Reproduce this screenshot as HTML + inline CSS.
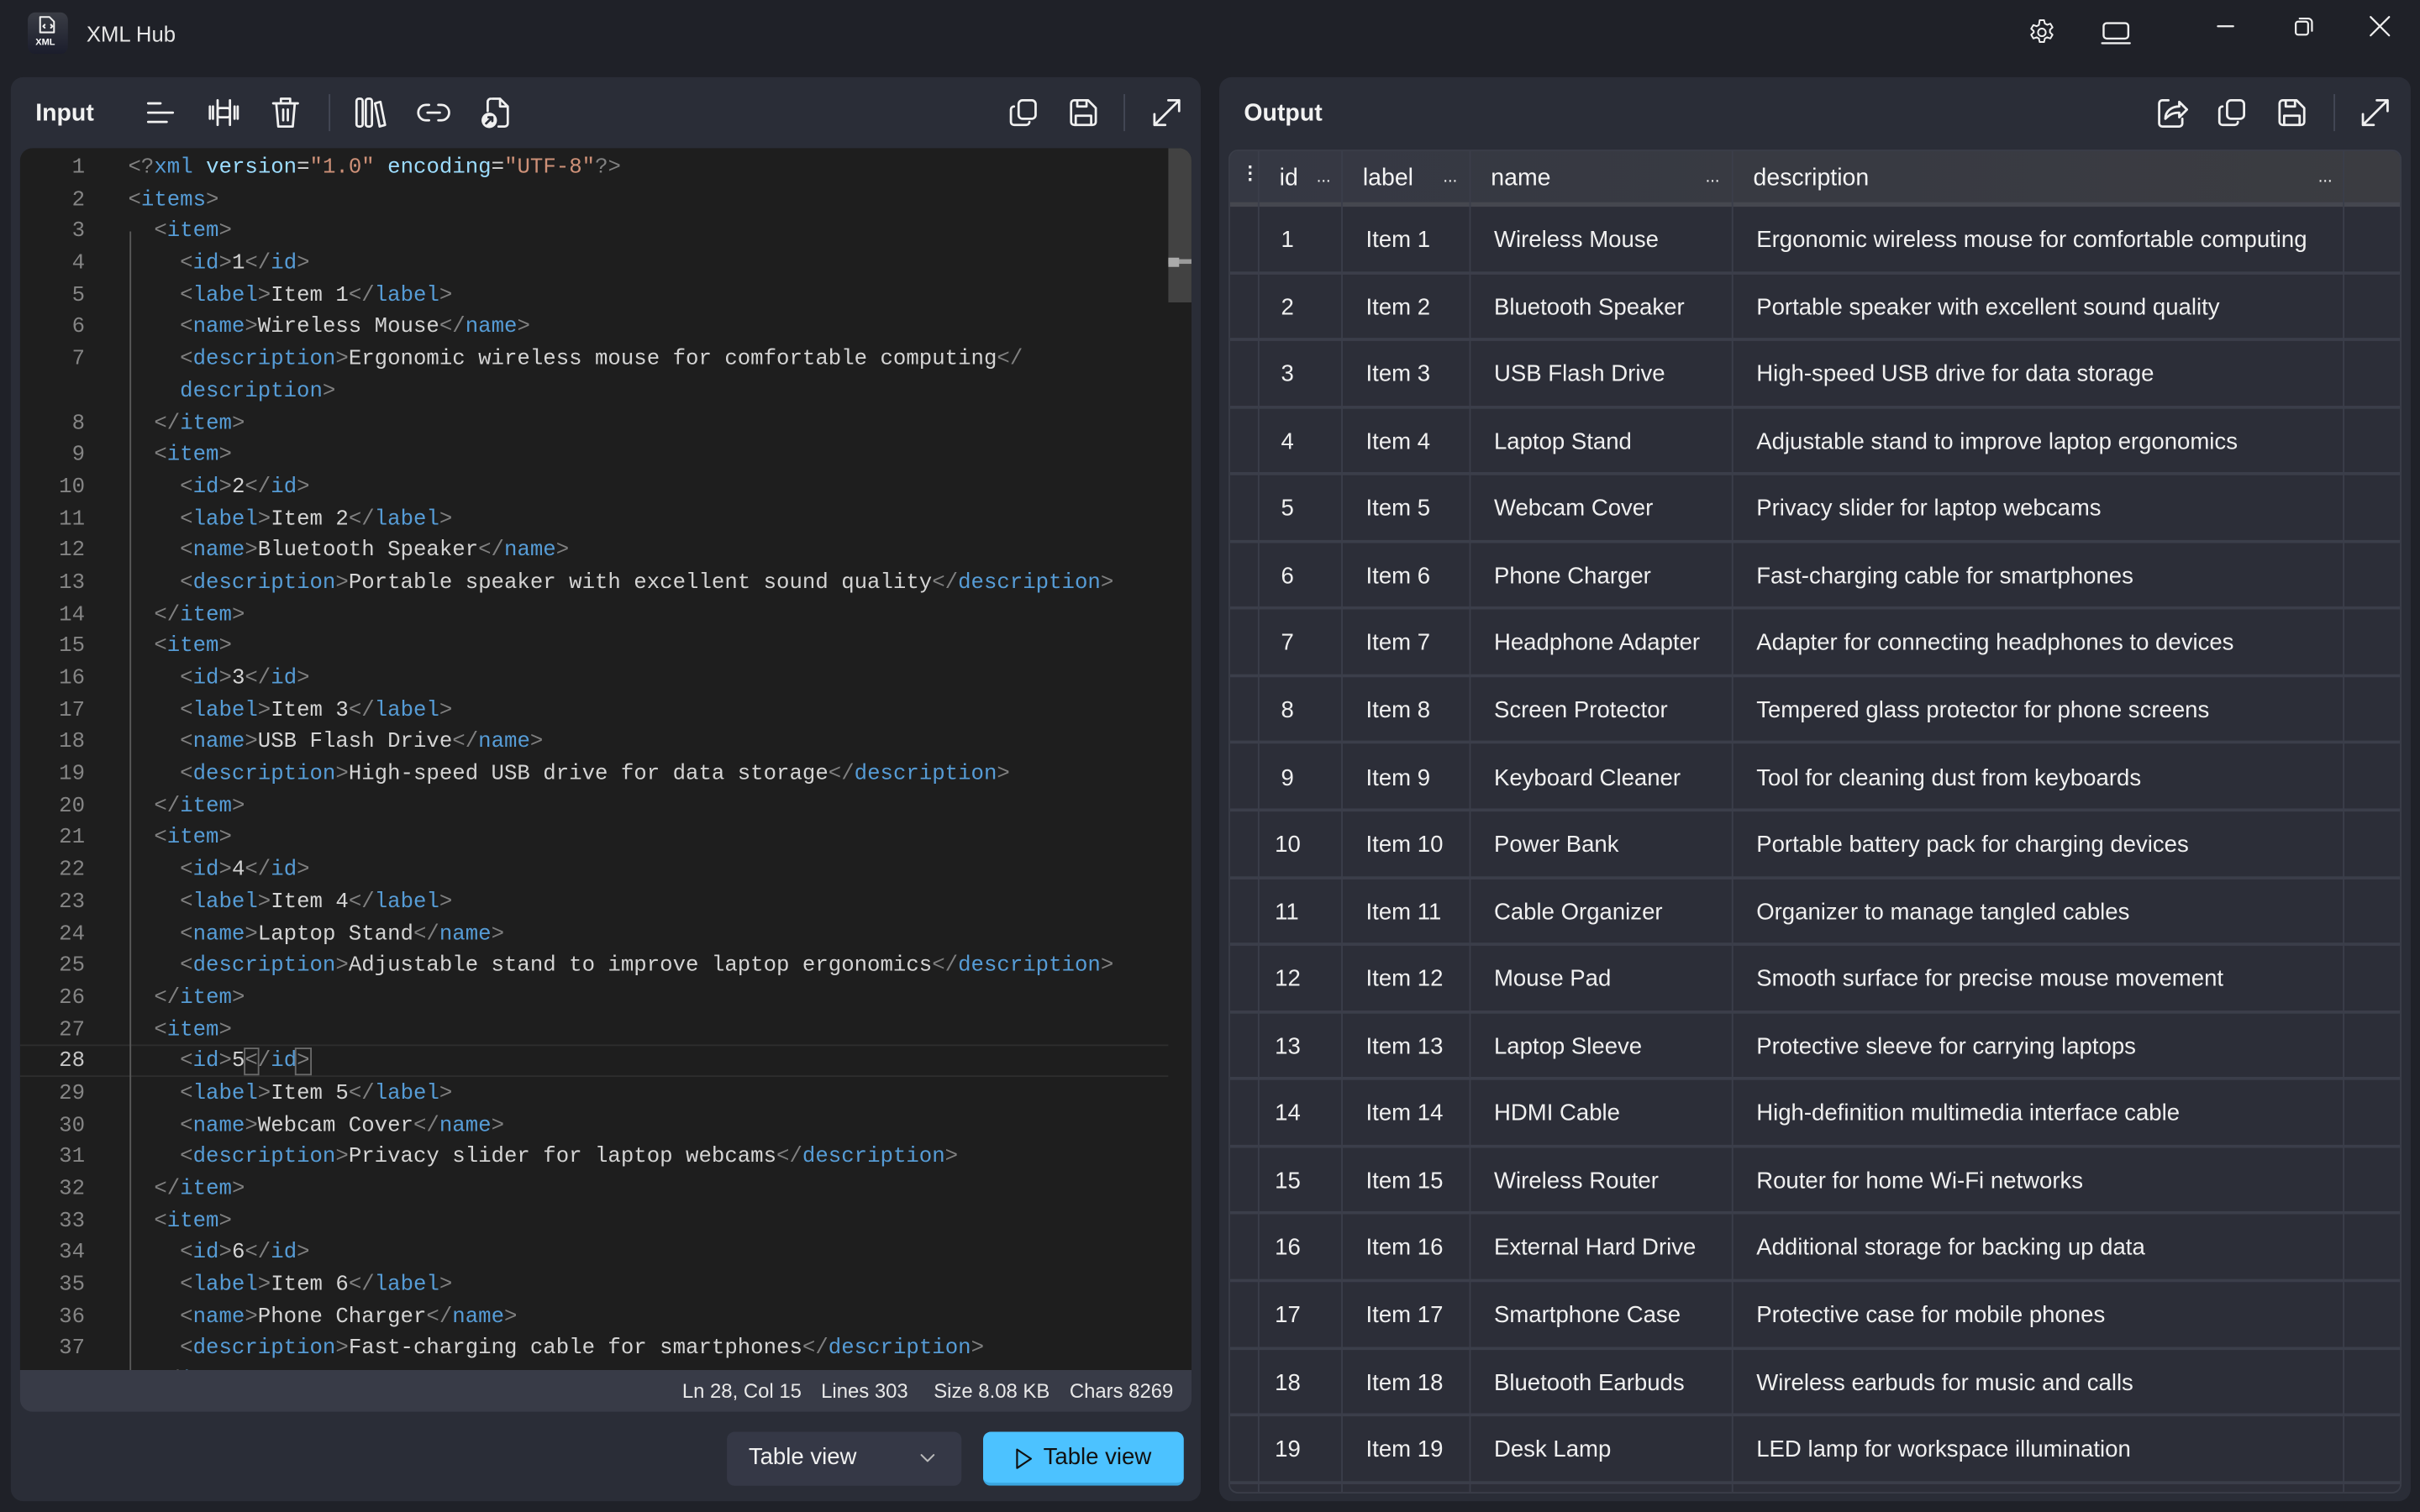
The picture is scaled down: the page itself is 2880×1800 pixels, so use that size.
<!DOCTYPE html>
<html><head><meta charset="utf-8"><style>
*{margin:0;padding:0;box-sizing:border-box}
html,body{width:2880px;height:1800px;overflow:hidden;background:#1f2128}
#root{position:absolute;left:0;top:0;width:1568px;height:980px;transform:scale(1.836735);transform-origin:0 0;background:#1f2128;font-family:"Liberation Sans",sans-serif;color:#fff}
.abs{position:absolute}
.panel{position:absolute;top:50px;height:923px;background:#2a2d37;border-radius:8px}
.ptitle{position:absolute;top:65px;font-size:15.5px;font-weight:bold;color:#f2f2f2}
svg.ic{position:absolute;fill:none;stroke:#f0f0f0;stroke-width:1.5;stroke-linecap:round;stroke-linejoin:round}
.sep{position:absolute;width:1px;height:24px;background:#444856}
#ed{position:absolute;left:13px;top:96px;width:759px;height:792px;background:#1e1e1e;border-radius:8px 8px 0 0;overflow:hidden}
.code{position:absolute;left:0;top:99px;font-family:"Liberation Mono",monospace;font-size:14px;line-height:20.68px;white-space:pre;color:#d4d4d4}
.ln{position:absolute;left:13px;width:42px;text-align:right;font-family:"Liberation Mono",monospace;font-size:14px;line-height:20.68px;color:#858585}
.b{color:#808080}.t{color:#569cd6}.a{color:#9cdcfe}.s{color:#ce9178}
#status{position:absolute;left:13px;top:888px;width:759px;height:27px;background:#383b47;border-radius:0 0 8px 8px;font-size:13px;color:#e8e8e8}
#tbl{position:absolute;left:796px;top:97px;width:760px;height:871px;background:#2c2e38;border-radius:6px;overflow:hidden;border:1px solid #3a3d48}
.row{position:absolute;left:0;width:760px;height:43.56px;border-bottom:2px solid #3b3e4a;font-size:15px;color:#f0f0f0}
.row span{position:absolute;top:13px}
.vl{position:absolute;top:0;width:1px;height:871px;background:#3b3e4a}
</style></head><body><div id="root">

<div class="abs" style="left:18px;top:8px;width:26px;height:27px;border-radius:5px;background:linear-gradient(#3a3d45,#1b1d2c)"></div>
<svg class="ic" style="left:24px;top:10px;stroke-width:1.1" width="14" height="16" viewBox="0 0 14 16"><path d="M2 1h6l3 3v7H2z"/><path d="M5 6l-1 1 1 1M9 6l1 1-1 1"/></svg>
<div class="abs" style="left:23px;top:25px;font-size:6px;font-weight:bold">XML</div>
<div class="abs" style="left:56px;top:14px;font-size:14px;color:#e6e6e6">XML Hub</div>
<svg class="ic" style="left:1313px;top:11px;stroke-width:1.3" width="20" height="20" viewBox="0 0 24 24"><circle cx="12" cy="12" r="3"/><path d="M10.3 2.5h3.4l.6 2.6 1.8 1 2.5-.9 1.7 2.9-2 1.8v2.1l2 1.8-1.7 2.9-2.5-.9-1.8 1-.6 2.7h-3.4l-.6-2.7-1.8-1-2.5.9-1.700-2.9 2-1.8V11l-2-1.8 1.7-2.9 2.5.9 1.8-1z"/></svg>
<svg class="ic" style="left:1361px;top:13px;stroke-width:1.3" width="20" height="16" viewBox="0 0 20 16"><rect x="2" y="2" width="16" height="10" rx="2"/><path d="M1 15h18"/></svg>
<svg class="ic" style="left:1435px;top:10px;stroke-width:1.2" width="14" height="14"><path d="M2 7h10"/></svg>
<svg class="ic" style="left:1486px;top:10px;stroke-width:1.2" width="14" height="14" viewBox="0 0 14 14"><rect x="1.5" y="4" width="8" height="8.5" rx="1.5"/><path d="M4 2h5.5A2.5 2.5 0 0 1 12 4.5V10"/></svg>
<svg class="ic" style="left:1535px;top:10px;stroke-width:1.2" width="14" height="14"><path d="M1 1l12 12M13 1L1 13"/></svg>

<div class="panel" style="left:7px;width:771px"></div>
<div class="ptitle" style="left:23px">Input</div>
<svg class="ic" style="left:94px;top:64px" width="20" height="18"><path d="M2 3h8M2 9h16M2 15h12"/></svg>
<svg class="ic" style="left:134px;top:63px" width="22" height="20"><path d="M2 6v8M4 6v8M18 6v8M20 6v8M7 2v16M15 2v16"/><rect x="7" y="7" width="8" height="6" rx="1.5"/></svg>
<svg class="ic" style="left:175px;top:62px" width="20" height="22"><path d="M2 5h16M7 5V2h6v3M4 5l1.3 15h9.4L16 5M8.5 9v7M11.5 9v7"/></svg>
<div class="sep" style="left:213px;top:61px"></div>
<svg class="ic" style="left:229px;top:62px" width="22" height="22"><rect x="2" y="2" width="4" height="18" rx="1.5"/><rect x="8" y="2" width="4" height="18" rx="1.5"/><path d="M14 5l3.5-1 3 15-3.5 1z"/></svg>
<svg class="ic" style="left:270px;top:63px" width="22" height="20"><path d="M8 5H6a5 5 0 0 0 0 10h2M14 5h2a5 5 0 0 1 0 10h-2M7 10h8"/></svg>
<svg class="ic" style="left:311px;top:62px" width="20" height="22"><path d="M8 2h5l5 5v11a2 2 0 0 1-2 2h-4M5 10V4a2 2 0 0 1 2-2M13 2v5h5"/><circle cx="6" cy="16" r="5" fill="#f0f0f0" stroke="none"/><path d="M4 18l4-4M5.5 14H8v2.5" stroke="#2a2d37"/></svg>
<svg class="ic" style="left:653px;top:63px" width="20" height="20"><rect x="7" y="2" width="11" height="12" rx="2.5"/><path d="M4 6a2 2 0 0 0-2 2v8a2 2 0 0 0 2 2h8a2 2 0 0 0 2-2"/></svg>
<svg class="ic" style="left:692px;top:63px" width="20" height="20"><path d="M4 2h9l5 5v9a2 2 0 0 1-2 2H4a2 2 0 0 1-2-2V4a2 2 0 0 1 2-2z"/><path d="M6 2v4h6V2M5 18v-6h10v6"/></svg>
<div class="sep" style="left:728px;top:61px"></div>
<svg class="ic" style="left:745px;top:62px" width="22" height="22"><path d="M3 19L19 3M12 3h7v7M3 12v7h7"/></svg>

<div id="ed">
<div class="abs" style="left:744px;top:0;width:15px;height:100px;background:#424242"></div>
<div class="abs" style="left:744px;top:72px;width:15px;height:3px;background:#9a9a9a"></div>
<div class="abs" style="left:744px;top:71px;width:7px;height:6px;background:#aaa"></div>
<div class="abs" style="left:0;top:581px;width:744px;height:21px;border-top:1px solid #2e2e2e;border-bottom:1px solid #2e2e2e"></div>
<div class="abs" style="left:71px;top:54px;width:1px;height:740px;background:#5a5a5a"></div>
</div>

<div class="ln" style="top:99px">1<br>2<br>3<br>4<br>5<br>6<br>7<br><br>8<br>9<br>10<br>11<br>12<br>13<br>14<br>15<br>16<br>17<br>18<br>19<br>20<br>21<br>22<br>23<br>24<br>25<br>26<br>27<br><span style="color:#c6c6c6">28</span><br>29<br>30<br>31<br>32<br>33<br>34<br>35<br>36<br>37<br>38</div>

<div class="code" style="left:83px;height:789px;overflow:hidden"><span class="b">&lt;?</span><span class="t">xml</span> <span class="a">version</span>=<span class="s">"1.0"</span> <span class="a">encoding</span>=<span class="s">"UTF-8"</span><span class="b">?&gt;</span>
<span class="b">&lt;</span><span class="t">items</span><span class="b">&gt;</span>
  <span class="b">&lt;</span><span class="t">item</span><span class="b">&gt;</span>
    <span class="b">&lt;</span><span class="t">id</span><span class="b">&gt;</span>1<span class="b">&lt;/</span><span class="t">id</span><span class="b">&gt;</span>
    <span class="b">&lt;</span><span class="t">label</span><span class="b">&gt;</span>Item 1<span class="b">&lt;/</span><span class="t">label</span><span class="b">&gt;</span>
    <span class="b">&lt;</span><span class="t">name</span><span class="b">&gt;</span>Wireless Mouse<span class="b">&lt;/</span><span class="t">name</span><span class="b">&gt;</span>
    <span class="b">&lt;</span><span class="t">description</span><span class="b">&gt;</span>Ergonomic wireless mouse for comfortable computing<span class="b">&lt;/</span>
    <span class="t">description</span><span class="b">&gt;</span>
  <span class="b">&lt;/</span><span class="t">item</span><span class="b">&gt;</span>
  <span class="b">&lt;</span><span class="t">item</span><span class="b">&gt;</span>
    <span class="b">&lt;</span><span class="t">id</span><span class="b">&gt;</span>2<span class="b">&lt;/</span><span class="t">id</span><span class="b">&gt;</span>
    <span class="b">&lt;</span><span class="t">label</span><span class="b">&gt;</span>Item 2<span class="b">&lt;/</span><span class="t">label</span><span class="b">&gt;</span>
    <span class="b">&lt;</span><span class="t">name</span><span class="b">&gt;</span>Bluetooth Speaker<span class="b">&lt;/</span><span class="t">name</span><span class="b">&gt;</span>
    <span class="b">&lt;</span><span class="t">description</span><span class="b">&gt;</span>Portable speaker with excellent sound quality<span class="b">&lt;/</span><span class="t">description</span><span class="b">&gt;</span>
  <span class="b">&lt;/</span><span class="t">item</span><span class="b">&gt;</span>
  <span class="b">&lt;</span><span class="t">item</span><span class="b">&gt;</span>
    <span class="b">&lt;</span><span class="t">id</span><span class="b">&gt;</span>3<span class="b">&lt;/</span><span class="t">id</span><span class="b">&gt;</span>
    <span class="b">&lt;</span><span class="t">label</span><span class="b">&gt;</span>Item 3<span class="b">&lt;/</span><span class="t">label</span><span class="b">&gt;</span>
    <span class="b">&lt;</span><span class="t">name</span><span class="b">&gt;</span>USB Flash Drive<span class="b">&lt;/</span><span class="t">name</span><span class="b">&gt;</span>
    <span class="b">&lt;</span><span class="t">description</span><span class="b">&gt;</span>High-speed USB drive for data storage<span class="b">&lt;/</span><span class="t">description</span><span class="b">&gt;</span>
  <span class="b">&lt;/</span><span class="t">item</span><span class="b">&gt;</span>
  <span class="b">&lt;</span><span class="t">item</span><span class="b">&gt;</span>
    <span class="b">&lt;</span><span class="t">id</span><span class="b">&gt;</span>4<span class="b">&lt;/</span><span class="t">id</span><span class="b">&gt;</span>
    <span class="b">&lt;</span><span class="t">label</span><span class="b">&gt;</span>Item 4<span class="b">&lt;/</span><span class="t">label</span><span class="b">&gt;</span>
    <span class="b">&lt;</span><span class="t">name</span><span class="b">&gt;</span>Laptop Stand<span class="b">&lt;/</span><span class="t">name</span><span class="b">&gt;</span>
    <span class="b">&lt;</span><span class="t">description</span><span class="b">&gt;</span>Adjustable stand to improve laptop ergonomics<span class="b">&lt;/</span><span class="t">description</span><span class="b">&gt;</span>
  <span class="b">&lt;/</span><span class="t">item</span><span class="b">&gt;</span>
  <span class="b">&lt;</span><span class="t">item</span><span class="b">&gt;</span>
    <span class="b">&lt;</span><span class="t">id</span><span class="b">&gt;</span>5<span class="b" style="outline:1px solid #6a6a6a">&lt;</span><span class="b">/</span><span class="t">id</span><span class="b" style="outline:1px solid #6a6a6a">&gt;</span>
    <span class="b">&lt;</span><span class="t">label</span><span class="b">&gt;</span>Item 5<span class="b">&lt;/</span><span class="t">label</span><span class="b">&gt;</span>
    <span class="b">&lt;</span><span class="t">name</span><span class="b">&gt;</span>Webcam Cover<span class="b">&lt;/</span><span class="t">name</span><span class="b">&gt;</span>
    <span class="b">&lt;</span><span class="t">description</span><span class="b">&gt;</span>Privacy slider for laptop webcams<span class="b">&lt;/</span><span class="t">description</span><span class="b">&gt;</span>
  <span class="b">&lt;/</span><span class="t">item</span><span class="b">&gt;</span>
  <span class="b">&lt;</span><span class="t">item</span><span class="b">&gt;</span>
    <span class="b">&lt;</span><span class="t">id</span><span class="b">&gt;</span>6<span class="b">&lt;/</span><span class="t">id</span><span class="b">&gt;</span>
    <span class="b">&lt;</span><span class="t">label</span><span class="b">&gt;</span>Item 6<span class="b">&lt;/</span><span class="t">label</span><span class="b">&gt;</span>
    <span class="b">&lt;</span><span class="t">name</span><span class="b">&gt;</span>Phone Charger<span class="b">&lt;/</span><span class="t">name</span><span class="b">&gt;</span>
    <span class="b">&lt;</span><span class="t">description</span><span class="b">&gt;</span>Fast-charging cable for smartphones<span class="b">&lt;/</span><span class="t">description</span><span class="b">&gt;</span>
  <span class="b">&lt;/</span><span class="t">item</span><span class="b">&gt;</span></div>

<div id="status"><span class="abs" style="left:429px;top:6px">Ln 28, Col 15</span><span class="abs" style="left:519px;top:6px">Lines 303</span><span class="abs" style="left:592px;top:6px">Size 8.08 KB</span><span class="abs" style="left:680px;top:6px">Chars 8269</span></div>

<div class="abs" style="left:471px;top:928px;width:152px;height:35px;background:#353846;border-radius:5px;font-size:15px;color:#f0f0f0"><span class="abs" style="left:14px;top:8px">Table view</span><svg class="ic" style="left:125px;top:13px;stroke-width:1.1;stroke:#bbb" width="10" height="8"><path d="M1 2l4 4 4-4"/></svg></div>
<div class="abs" style="left:637px;top:928px;width:130px;height:35px;background:#4cc2ff;border-radius:5px;border-bottom:2px solid #3aa6e0;font-size:15px;color:#111"><svg class="ic" style="left:20px;top:10px;stroke:#111;stroke-width:1.2" width="12" height="16"><path d="M2 1.5v12l9-6z"/></svg><span class="abs" style="left:39px;top:8px">Table view</span></div>

<div class="panel" style="left:790px;width:772px"></div>
<div class="ptitle" style="left:806px">Output</div>
<svg class="ic" style="left:1396px;top:62px" width="22" height="22"><path d="M9 3H5a2 2 0 0 0-2 2v13a2 2 0 0 0 2 2h11a2 2 0 0 0 2-2v-3"/><path d="M7 15c0-5 4-8 9-8V4l5 5-5 5v-3c-4 0-6 1-9 4z"/></svg>
<svg class="ic" style="left:1436px;top:63px" width="20" height="20"><rect x="7" y="2" width="11" height="12" rx="2.5"/><path d="M4 6a2 2 0 0 0-2 2v8a2 2 0 0 0 2 2h8a2 2 0 0 0 2-2"/></svg>
<svg class="ic" style="left:1475px;top:63px" width="20" height="20"><path d="M4 2h9l5 5v9a2 2 0 0 1-2 2H4a2 2 0 0 1-2-2V4a2 2 0 0 1 2-2z"/><path d="M6 2v4h6V2M5 18v-6h10v6"/></svg>
<div class="sep" style="left:1512px;top:61px"></div>
<svg class="ic" style="left:1528px;top:62px" width="22" height="22"><path d="M3 19L19 3M12 3h7v7M3 12v7h7"/></svg>

<div id="tbl">
<div class="abs" style="left:0;top:0;width:760px;height:36px;background:linear-gradient(90deg,#353843,#3b3c41);border-bottom:3px solid #45474f;font-size:15.5px;color:#f4f4f4">
<span class="abs" style="left:7px;top:7px;font-size:12px;font-weight:bold">&#8942;</span>
<span class="abs" style="left:32px;top:9px">id</span><span class="abs" style="left:56px;top:11px;font-size:11px">...</span>
<span class="abs" style="left:86px;top:9px">label</span><span class="abs" style="left:138px;top:11px;font-size:11px">...</span>
<span class="abs" style="left:169px;top:9px">name</span><span class="abs" style="left:308px;top:11px;font-size:11px">...</span>
<span class="abs" style="left:339px;top:9px">description</span><span class="abs" style="left:705px;top:11px;font-size:11px">...</span>
</div>
<div class="vl" style="left:18px"></div><div class="vl" style="left:72px"></div><div class="vl" style="left:155px"></div><div class="vl" style="left:325px"></div><div class="vl" style="left:721px"></div>
<div class="row" style="top:36px"><span style="left:33px">1</span><span style="left:88px">Item 1</span><span style="left:171px">Wireless Mouse</span><span style="left:341px">Ergonomic wireless mouse for comfortable computing</span></div>
<div class="row" style="top:79.6px"><span style="left:33px">2</span><span style="left:88px">Item 2</span><span style="left:171px">Bluetooth Speaker</span><span style="left:341px">Portable speaker with excellent sound quality</span></div>
<div class="row" style="top:123.1px"><span style="left:33px">3</span><span style="left:88px">Item 3</span><span style="left:171px">USB Flash Drive</span><span style="left:341px">High-speed USB drive for data storage</span></div>
<div class="row" style="top:166.7px"><span style="left:33px">4</span><span style="left:88px">Item 4</span><span style="left:171px">Laptop Stand</span><span style="left:341px">Adjustable stand to improve laptop ergonomics</span></div>
<div class="row" style="top:210.2px"><span style="left:33px">5</span><span style="left:88px">Item 5</span><span style="left:171px">Webcam Cover</span><span style="left:341px">Privacy slider for laptop webcams</span></div>
<div class="row" style="top:253.8px"><span style="left:33px">6</span><span style="left:88px">Item 6</span><span style="left:171px">Phone Charger</span><span style="left:341px">Fast-charging cable for smartphones</span></div>
<div class="row" style="top:297.4px"><span style="left:33px">7</span><span style="left:88px">Item 7</span><span style="left:171px">Headphone Adapter</span><span style="left:341px">Adapter for connecting headphones to devices</span></div>
<div class="row" style="top:340.9px"><span style="left:33px">8</span><span style="left:88px">Item 8</span><span style="left:171px">Screen Protector</span><span style="left:341px">Tempered glass protector for phone screens</span></div>
<div class="row" style="top:384.5px"><span style="left:33px">9</span><span style="left:88px">Item 9</span><span style="left:171px">Keyboard Cleaner</span><span style="left:341px">Tool for cleaning dust from keyboards</span></div>
<div class="row" style="top:428px"><span style="left:29px">10</span><span style="left:88px">Item 10</span><span style="left:171px">Power Bank</span><span style="left:341px">Portable battery pack for charging devices</span></div>
<div class="row" style="top:471.6px"><span style="left:29px">11</span><span style="left:88px">Item 11</span><span style="left:171px">Cable Organizer</span><span style="left:341px">Organizer to manage tangled cables</span></div>
<div class="row" style="top:515.2px"><span style="left:29px">12</span><span style="left:88px">Item 12</span><span style="left:171px">Mouse Pad</span><span style="left:341px">Smooth surface for precise mouse movement</span></div>
<div class="row" style="top:558.7px"><span style="left:29px">13</span><span style="left:88px">Item 13</span><span style="left:171px">Laptop Sleeve</span><span style="left:341px">Protective sleeve for carrying laptops</span></div>
<div class="row" style="top:602.3px"><span style="left:29px">14</span><span style="left:88px">Item 14</span><span style="left:171px">HDMI Cable</span><span style="left:341px">High-definition multimedia interface cable</span></div>
<div class="row" style="top:645.8px"><span style="left:29px">15</span><span style="left:88px">Item 15</span><span style="left:171px">Wireless Router</span><span style="left:341px">Router for home Wi-Fi networks</span></div>
<div class="row" style="top:689.4px"><span style="left:29px">16</span><span style="left:88px">Item 16</span><span style="left:171px">External Hard Drive</span><span style="left:341px">Additional storage for backing up data</span></div>
<div class="row" style="top:733px"><span style="left:29px">17</span><span style="left:88px">Item 17</span><span style="left:171px">Smartphone Case</span><span style="left:341px">Protective case for mobile phones</span></div>
<div class="row" style="top:776.5px"><span style="left:29px">18</span><span style="left:88px">Item 18</span><span style="left:171px">Bluetooth Earbuds</span><span style="left:341px">Wireless earbuds for music and calls</span></div>
<div class="row" style="top:820.1px"><span style="left:29px">19</span><span style="left:88px">Item 19</span><span style="left:171px">Desk Lamp</span><span style="left:341px">LED lamp for workspace illumination</span></div>
</div>

</div></body></html>
